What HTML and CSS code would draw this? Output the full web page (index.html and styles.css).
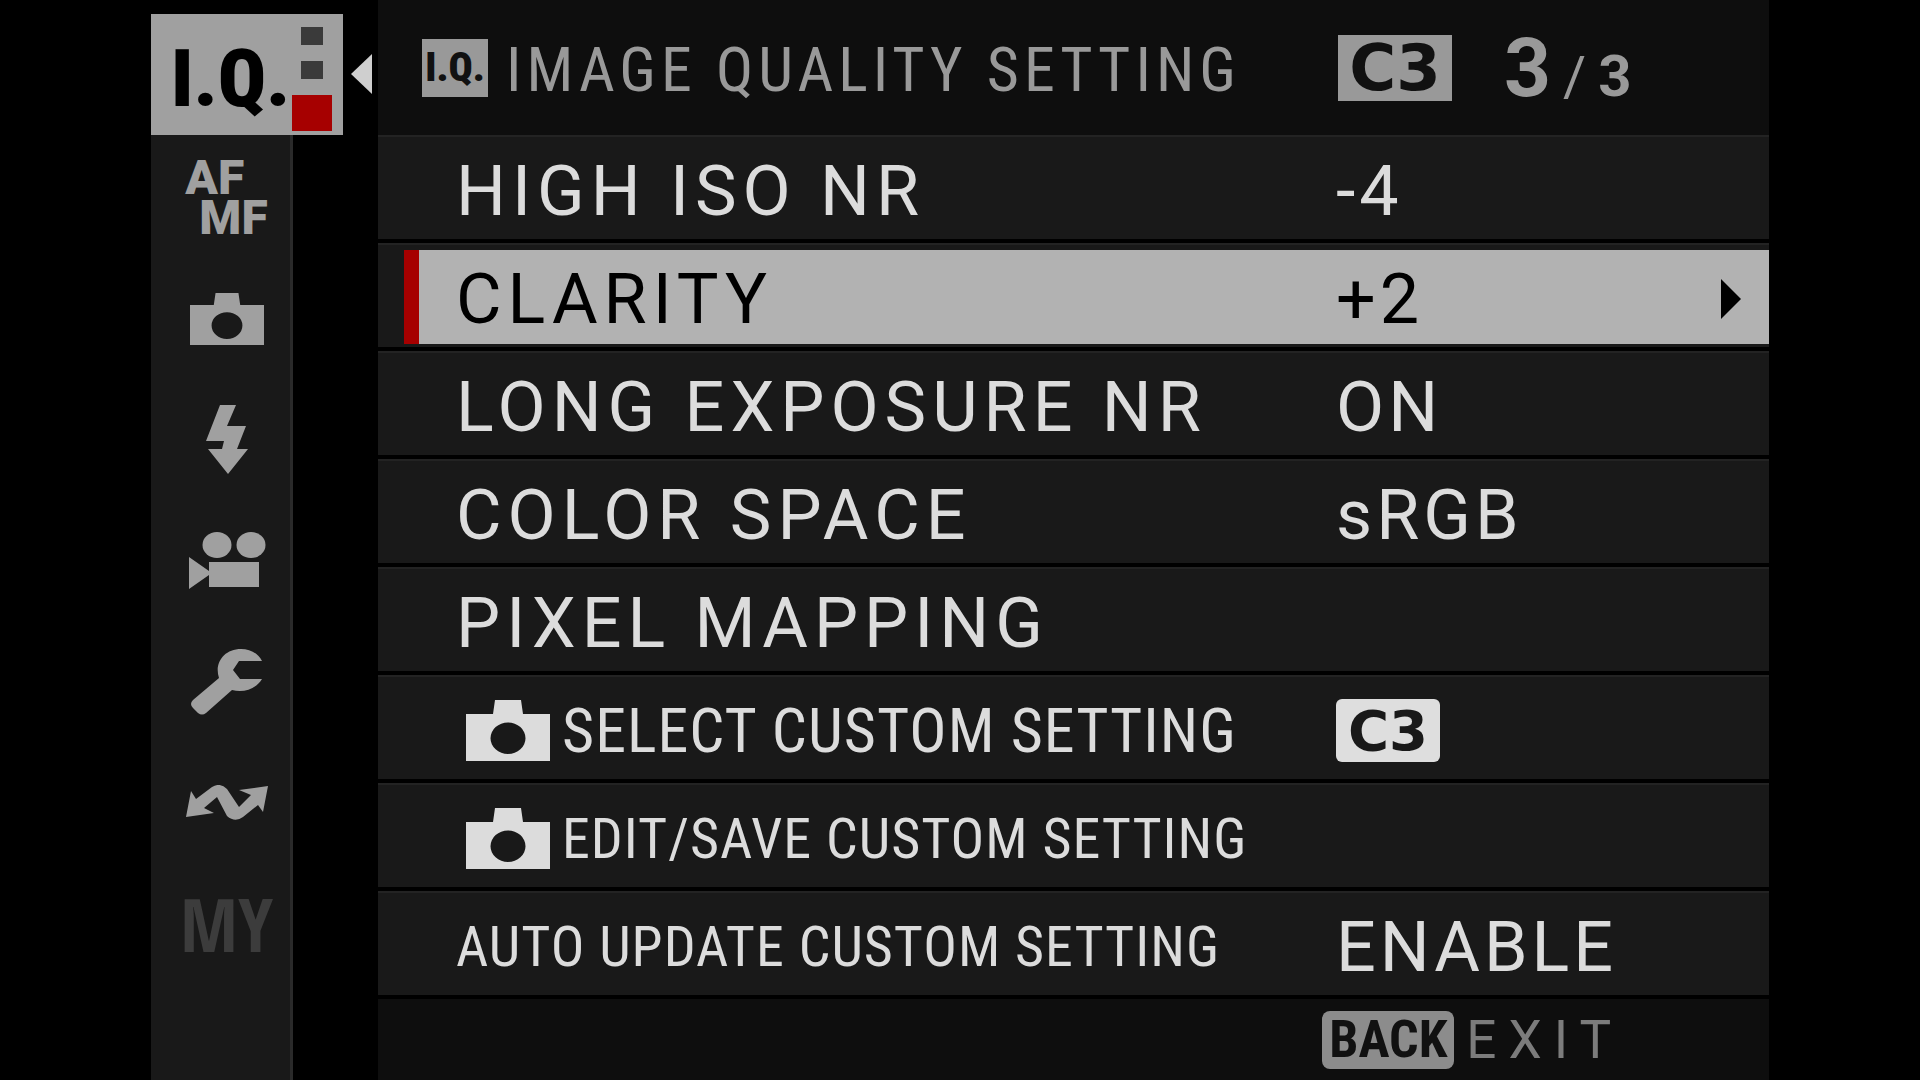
FILE: index.html
```html
<!DOCTYPE html>
<html lang="en">
<head>
<meta charset="utf-8">
<meta name="viewport" content="width=device-width, initial-scale=1">
<title>Image Quality Setting</title>
<link rel="stylesheet" href="styles.css">
</head>
<body>
<svg class="sprite">
  <symbol id="camera" viewBox="0 0 84 61" preserveAspectRatio="none">
    <path fill-rule="evenodd" d="M0 14H27L29 0H55L57 14H84V61H0ZM42 22.500A17.500 15.700 0 1 0 42 53.900A17.500 15.700 0 1 0 42 22.500Z"/>
  </symbol>
</svg>
<div class="menu">
  <nav class="rail" aria-label="Menu tabs">
    <button class="tab-active" type="button" aria-current="page">
      <span class="tab-active-name">I.Q.</span>
      <span class="pages"><i class="page"></i><i class="page"></i><i class="page page-current"></i></span>
    </button>
    <svg class="pointer" viewBox="0 0 22 40" aria-hidden="true"><path d="M21 0V40L0 20Z"/></svg>
    <div class="tabs">
      <button class="tab" type="button"><span class="afmf"><span>AF</span><span class="mf">MF</span></span></button>
      <button class="tab" type="button" aria-label="Shooting"><svg width="74" height="52"><use href="#camera"/></svg></button>
      <button class="tab" type="button" aria-label="Flash"><svg width="42" height="69" viewBox="0 0 42 69"><path d="M14 0H30L21 21H40L31 44H42L22 69L2 44H16L18 36H0Z"/></svg></button>
      <button class="tab" type="button" aria-label="Movie"><svg width="78" height="58" viewBox="0 0 78 58"><ellipse cx="29" cy="13" rx="14.500" ry="13"/><ellipse cx="63" cy="13" rx="14.500" ry="13"/><path d="M1 25L21 39V30H71V55H21V43L1 57Z"/></svg></button>
      <button class="tab" type="button" aria-label="Set up"><svg width="74" height="68" viewBox="0 0 74 68"><path d="M72 13H49L43 22L50 31H72C66 41 54 45 42 42L16 65Q12 68 8 65L3 60Q-1 56 3 52L29 30C24 15 34 1 51 1C60 1 68 5 72 13Z"/></svg></button>
      <button class="tab" type="button" aria-label="Network"><svg width="82" height="36" viewBox="0 0 82 36"><path d="M0 32L5 6L10 14L26 2Q34 -3 41 4L53 22L65 10L53 5L82 1L77 27L72 20L57 32Q49 38 41 31L31 12L18 23L28 28Z"/></svg></button>
      <button class="tab tab-my" type="button">MY</button>
    </div>
  </nav>
  <main class="panel">
    <header class="head">
      <span class="badge badge-iq">I.Q.</span>
      <h1 class="title">IMAGE QUALITY SETTING</h1>
      <span class="badge badge-bank">C3</span>
      <span class="count"><b class="count-now">3</b><span class="count-slash">/</span><b class="count-all">3</b></span>
    </header>
    <ul class="rows">
      <li><button class="row" type="button"><span class="label">HIGH ISO NR</span><span class="value">-4</span></button></li>
      <li><button class="row row-selected" type="button"><span class="label">CLARITY</span><span class="value">+2</span><svg class="more" viewBox="0 0 20 40" aria-hidden="true"><path d="M0 0L20 20L0 40Z"/></svg></button></li>
      <li><button class="row" type="button"><span class="label">LONG EXPOSURE NR</span><span class="value">ON</span></button></li>
      <li><button class="row" type="button"><span class="label">COLOR SPACE</span><span class="value">sRGB</span></button></li>
      <li><button class="row" type="button"><span class="label">PIXEL MAPPING</span></button></li>
      <li><button class="row" type="button"><span class="label label-long"><svg class="row-icon" aria-hidden="true"><use href="#camera"/></svg>SELECT CUSTOM SETTING</span><span class="value"><span class="badge badge-value">C3</span></span></button></li>
      <li><button class="row" type="button"><span class="label label-longest"><svg class="row-icon" aria-hidden="true"><use href="#camera"/></svg>EDIT/SAVE CUSTOM SETTING</span></button></li>
      <li><button class="row" type="button"><span class="label label-longest">AUTO UPDATE CUSTOM SETTING</span><span class="value">ENABLE</span></button></li>
    </ul>
    <footer class="foot"><button class="exit" type="button"><span class="badge badge-back">BACK</span>EXIT</button></footer>
  </main>
</div>
</body>
</html>
```
FILE: styles.css
```css
* { box-sizing: border-box; }

body {
  margin: 0;
  background: #000;
  font-family: Roboto, "Liberation Sans", sans-serif;
}

button {
  margin: 0;
  padding: 0;
  border: 0;
  background: none;
  color: inherit;
  font: inherit;
  letter-spacing: inherit;
  text-align: left;
}

svg { fill: currentColor; flex: none; }
.sprite { display: none; }

.menu {
  display: grid;
  grid-template-columns: 227px 1fr;
  max-width: 1618px;
  min-height: 100vh;
  margin: 0 auto;
}

/* Tab rail */
.rail {
  display: grid;
  grid-template-columns: 192px 1fr;
  grid-template-rows: 121px 1fr;
  padding-top: 14px;
}

.tab-active {
  display: flex;
  justify-content: space-between;
  align-items: center;
  padding: 13px 11px 4px 20px;
  background: #a0a0a0;
  color: #000;
}

.tab-active-name {
  font: 900 80px/96px "Roboto Condensed", sans-serif;
}

.pages {
  display: flex;
  flex-direction: column;
  justify-content: space-between;
  align-items: center;
  align-self: stretch;
}

.page { width: 22px; height: 18px; background: #3a3a3a; }
.page-current { width: 40px; height: 36px; background: #a60000; }

.pointer {
  width: 22px;
  height: 40px;
  margin: 40px 0 0 8px;
  color: #cfcfcf;
}

.tabs {
  width: 142px;
  padding-top: 2px;
  border-right: 3px solid #2a2a2a;
  background: #191919;
  color: #a0a0a0;
}

.tab {
  display: flex;
  align-items: center;
  justify-content: center;
  width: 100%;
  height: 121px;
  padding-left: 12px;
}

.afmf {
  display: flex;
  flex-direction: column;
  font-size: 48px;
  font-weight: 900;
  line-height: 40px;
}

.mf { padding-left: 14px; }

.tab-my {
  color: #3c3c3c;
  font: 700 74px/80px "Open Sans Condensed", sans-serif;
}

/* Panel */
.panel { display: flex; flex-direction: column; background: #0e0e0e; }

.head {
  display: flex;
  align-items: center;
  height: 135px;
  padding-left: 44px;
  color: #999;
}

.badge {
  display: flex;
  align-items: center;
  justify-content: center;
  background: #999;
  color: #111;
  letter-spacing: 0;
}

.badge-iq {
  width: 66px;
  height: 58px;
  font: 900 40px/40px "Roboto Condensed", sans-serif;
}

.title {
  flex: 1;
  margin: 4px 0 0 18px;
  font: 400 62px/72px "Roboto Condensed", sans-serif;
  letter-spacing: 5px;
}

.badge-bank {
  width: 114px;
  height: 66px;
  font: 700 64px/64px "DejaVu Sans", sans-serif;
}

.count {
  display: flex;
  align-items: baseline;
  width: 317px;
  padding-left: 52px;
}

.count-now { font-size: 82px; }
.count-slash { padding: 0 12px; font-size: 56px; }
.count-all { font-size: 58px; }

.rows { margin: 0; padding: 0; list-style: none; color: #dcdcdc; }

.row {
  display: grid;
  grid-template-columns: 1fr 433px;
  align-items: center;
  width: 100%;
  height: 108px;
  padding: 5px 0 0 78px;
  border-top: 2px solid #232323;
  border-bottom: 4px solid #000;
  background: #191919;
  font-size: 70px;
  line-height: 80px;
}

.label { display: flex; align-items: center; letter-spacing: 6px; white-space: nowrap; }
.value { letter-spacing: 4px; }

.label-long,
.label-longest {
  font-family: "Roboto Condensed", sans-serif;
  font-size: 62px;
  letter-spacing: 1px;
}

.label-longest { font-size: 56px; }

.row-icon { width: 84px; height: 61px; margin: 0 12px 0 10px; }

.row-selected {
  grid-template-columns: 1fr 385px 48px;
  padding-left: 26px;
  background: linear-gradient(#b2b2b2, #b2b2b2) 41px 5px / 100% 94px no-repeat, linear-gradient(#a60000, #a60000) 26px 5px / 15px 94px no-repeat, #191919;
  color: #000;
}

.row-selected .label { padding-left: 52px; }
.more { width: 20px; height: 40px; }

.badge-value {
  width: 104px;
  height: 63px;
  border-radius: 6px;
  background: #dedede;
  color: #191919;
  font: 700 56px/58px "DejaVu Sans", sans-serif;
}

.foot { display: flex; justify-content: flex-end; flex: 1; padding: 11px 146px 0 0; }

.exit {
  display: flex;
  align-items: center;
  gap: 12px;
  height: 60px;
  color: #7c7c7c;
  font-size: 53px;
  letter-spacing: 12px;
}

.badge-back {
  width: 132px;
  height: 58px;
  border-radius: 8px;
  background: #8c8c8c;
  font: 700 52px/56px "Roboto Condensed", sans-serif;
}
```
